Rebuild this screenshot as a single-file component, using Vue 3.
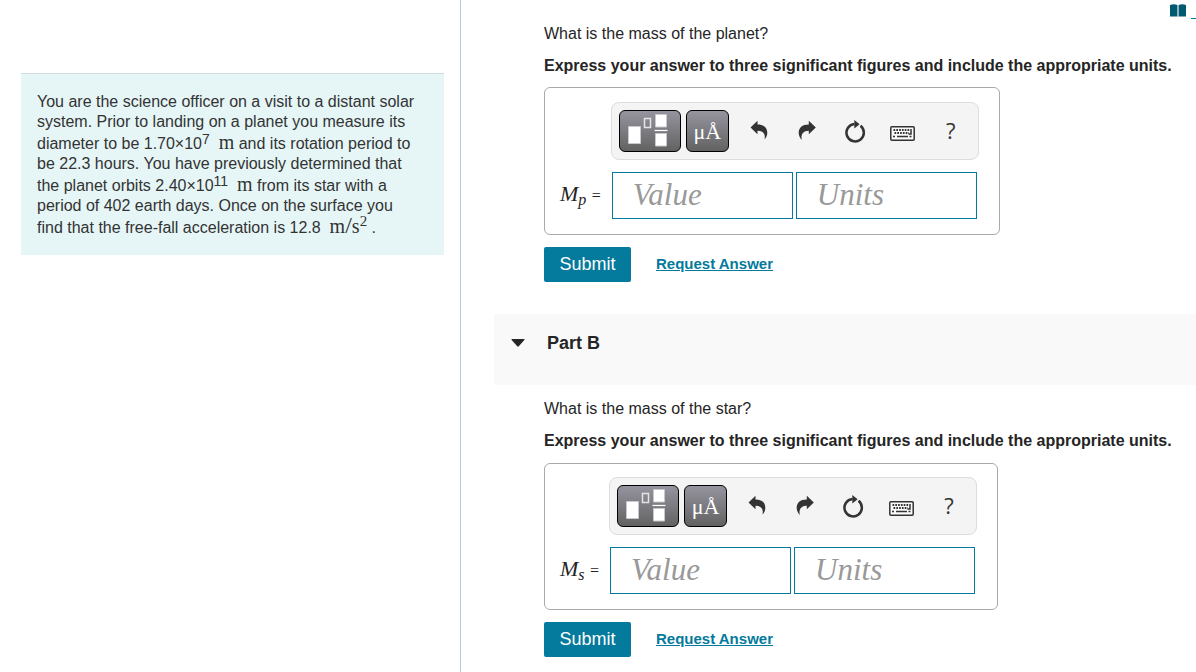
<script setup>
import { ref } from 'vue'

const parts = ref([
  { id: 'a', question: 'What is the mass of the planet?', sub: 'p', value: '', units: '' },
  { id: 'b', title: 'Part B', question: 'What is the mass of the star?', sub: 's', value: '', units: '' },
])
</script>

<template>
  <div class="page">
    <aside class="problem">
      <p class="problem-text">
        You are the science officer on a visit to a distant solar system. Prior to landing on a planet you
        measure its diameter to be 1.70×10<sup class="exp">7</sup>&nbsp; <span class="unit">m</span> and its
        rotation period to be 22.3 hours. You have previously determined that the planet orbits
        2.40×10<sup class="exp">11</sup>&nbsp; <span class="unit">m</span> from its star with a period of 402
        earth days. Once on the surface you find that the free-fall acceleration is 12.8&nbsp;
        <span class="unit">m<span class="slash">/</span>s<sup class="unit-exp">2</sup></span> .
      </p>
    </aside>

    <main class="work">
      <a class="review" href="#review" aria-label="Review">
        <svg width="16" height="13" viewBox="0 0 16 13" aria-hidden="true">
          <path d="M0 1 Q4 -0.5 7.3 1 V12.5 H0Z M8.7 1 Q12 -0.5 16 1 V12.5 H8.7Z" fill="#005a70" />
          <path d="M7.3 1h1.4v11.5h-1.4z" fill="#7fadb8" />
        </svg>
        <span class="review-line"></span>
      </a>

      <section v-for="part in parts" :key="part.id" :class="'part part-' + part.id">
        <h2 v-if="part.title" class="part-head">
          <svg class="caret" width="14" height="8" viewBox="0 0 14 8" aria-hidden="true">
            <path d="M1 0h12q1 0 .3 1L7.8 7.3q-.8.8-1.6 0L.7 1Q0 0 1 0Z" fill="#252525" />
          </svg>
          {{ part.title }}
        </h2>
        <div class="part-body">
          <p class="question">{{ part.question }}</p>
          <p class="instruction">Express your answer to three significant figures and include the appropriate units.</p>

          <div class="answer">
            <div class="toolbar" role="toolbar" aria-label="Equation tools">
              <button class="tile tile-templates" type="button" aria-label="Templates">
                <svg width="60" height="40" viewBox="0 0 60 40" aria-hidden="true">
                  <g fill="#fff" stroke="#c9c9cd" stroke-width="1">
                    <path d="M8.5 15.500h12v17h-12z" />
                    <path d="M35.500 3.500h11v12.500h-11zM35.500 22.500h11v12.500h-11z" />
                  </g>
                  <path d="M24.500 7.500h6v9h-6z" fill="none" stroke="#e4e4e6" stroke-width="1.500" />
                  <path d="M34.500 19.500h13" stroke="#fff" stroke-width="1.300" />
                </svg>
              </button>
              <button class="tile tile-symbols" type="button" aria-label="Symbols">μÅ</button>
              <button class="tool" type="button" aria-label="Undo">
                <svg width="20" height="22" viewBox="0 0 20 22" aria-hidden="true">
                  <path d="M1.500 7.500 8.500 .8V4.500C15.500 4.500 18.300 8 18.300 12.800 18.300 15.800 17.200 17.800 15.500 19.500 16.500 14.800 15 11 8.500 10.800V14.200Z" fill="#333" />
                </svg>
              </button>
              <button class="tool" type="button" aria-label="Redo">
                <svg width="20" height="22" viewBox="0 0 20 22" aria-hidden="true">
                  <path d="M18.800 7.500 11.800 .8V4.500C5 4.500 1.700 8 1.700 12.800 1.700 15.800 3 18 4.800 20 3.800 15 5.300 11 11.800 10.800V14.200Z" fill="#333" />
                </svg>
              </button>
              <button class="tool" type="button" aria-label="Reset">
                <svg width="22" height="24" viewBox="0 0 22 24" aria-hidden="true">
                  <path d="M10.500 5A8.700 8.700 0 1 0 16.500 6.800" fill="none" stroke="#333" stroke-width="2.500" />
                  <path d="M10.300 1 15.600 5.300 10.300 9.500Z" fill="#333" />
                </svg>
              </button>
              <button class="tool" type="button" aria-label="Keyboard">
                <svg class="keyboard" width="25" height="15" viewBox="0 0 25 15" aria-hidden="true">
                  <rect x=".8" y=".8" width="23.400" height="13.400" rx="1" fill="#fafafa" stroke="#333" stroke-width="1.500" />
                  <path d="M3.500 4H20M4.500 7H19" fill="none" stroke="#333" stroke-width="1.800" stroke-dasharray="1.700 1.100" />
                  <path d="M21 3v5h-2.500M3 10.600h2M7 10.600h11M19.500 10.600h2" fill="none" stroke="#333" stroke-width="1.500" />
                </svg>
              </button>
              <button class="tool help" type="button" aria-label="Help">?</button>
            </div>
            <label class="symbol" :for="'value-' + part.id"><i>M<sub>{{ part.sub }}</sub></i> <span class="equals">=</span></label>
            <div class="fields">
              <input :id="'value-' + part.id" v-model="part.value" class="field" type="text" placeholder="Value" />
              <input v-model="part.units" class="field" type="text" placeholder="Units" aria-label="Units" />
            </div>
          </div>

          <div class="actions">
            <button class="submit" type="button">Submit</button>
            <a class="request" href="#answer">Request Answer</a>
          </div>
        </div>
      </section>
    </main>
  </div>
</template>

<style>
body {
  margin: 0;
  background: #fff;
}
</style>

<style scoped>
.page {
  display: grid;
  grid-template-columns: 5fr 8fr;
  height: 100vh;
  overflow: hidden;
  font-family: "Liberation Sans", Arial, sans-serif;
  font-size: 16px;
  line-height: 20px;
  color: #252525;
}
p, h2 {
  margin: 0;
}
.problem {
  padding: 73px 16px 0 21px;
}
.problem-text {
  padding: 18px 24px 17px 16px;
  border-top: 1px solid #d3dddf;
  background: #e6f6f7;
  color: #333;
}
.exp {
  font-size: 14px;
  line-height: 14px;
  vertical-align: 5px;
}
.unit {
  font-family: "Liberation Serif", "Times New Roman", serif;
  font-size: 20px;
  line-height: 14px;
}
.slash {
  font-size: 24px;
  line-height: 14px;
}
.unit-exp {
  font-size: 15px;
  line-height: 10px;
  vertical-align: 7px;
}
.work {
  position: relative;
  min-width: 0;
  border-left: 1px solid #b9c9d6;
}
.review {
  position: absolute;
  top: 4px;
  right: 0;
  display: flex;
  gap: 5px;
}
.review-line {
  width: 5px;
  height: 1px;
  margin-top: 14px;
  background: #047a9c;
}
.part-body {
  padding: 24px 0 0 83px;
}
.part-b .part-body {
  padding-top: 14px;
}
.part-head {
  display: flex;
  align-items: center;
  gap: 22px;
  height: 57px;
  margin: 32px 0 0 33px;
  padding: 0 0 14px 17px;
  background: #f9f9f9;
  font-size: 18px;
}
.instruction {
  margin-top: 12px;
  font-weight: bold;
  white-space: nowrap;
}
.answer {
  display: grid;
  grid-template-columns: auto auto;
  align-items: center;
  gap: 12px 10px;
  width: max-content;
  margin-top: 11px;
  padding: 14px 20px 15px 15px;
  border: 1px solid #aaa;
  border-radius: 6px;
}
.part-b .answer {
  margin-top: 12px;
  padding-top: 13px;
}
.toolbar {
  grid-column: 2;
  display: flex;
  align-items: center;
  padding: 7px 3px 7px 7px;
  border: 1px solid #ddd;
  border-radius: 8px;
  background: #f4f4f4;
}
button {
  margin: 0;
  padding: 0;
  font: inherit;
}
.tile {
  display: grid;
  place-items: center;
  height: 42px;
  margin-right: 5px;
  border: 1px solid #000;
  border-radius: 6px;
  background: linear-gradient(#96949f, #626262);
  color: #fff;
}
.tile-templates {
  width: 62px;
}
.tile-symbols {
  width: 43px;
  margin-right: 6px;
  padding-top: 2px;
  font-family: "Liberation Serif", serif;
  font-size: 22px;
}
.tool {
  display: grid;
  place-items: center;
  width: 48px;
  height: 42px;
  border: 0;
  background: none;
  color: #333;
}
.keyboard {
  margin-top: 5px;
}
.help {
  padding-bottom: 2px;
  font-family: "Open Sans", sans-serif;
  font-size: 22px;
}
.symbol {
  padding-bottom: 2px;
  font-family: "Liberation Serif", serif;
  font-size: 22px;
}
.symbol sub {
  font-size: 16px;
  line-height: 0;
  vertical-align: -4px;
}
.equals {
  font-size: 16px;
}
.fields {
  display: flex;
  gap: 3px;
  margin-left: 1px;
}
.field {
  box-sizing: border-box;
  width: 181px;
  height: 47px;
  padding: 0 20px 2px;
  border: 1px solid #047a9c;
  border-radius: 0;
  background: #fff;
  color: #252525;
  font: italic 31px "Liberation Serif", serif;
}
.field::placeholder {
  color: #999;
  opacity: 1;
}
.actions {
  display: flex;
  align-items: center;
  gap: 25px;
  margin-top: 12px;
}
.submit {
  width: 87px;
  height: 35px;
  padding-bottom: 2px;
  border: 0;
  border-radius: 2px;
  background: #047a9c;
  color: #fff;
  font-size: 18px;
}
.request {
  padding-bottom: 2px;
  color: #047a9c;
  font-size: 15px;
  font-weight: bold;
}
</style>
